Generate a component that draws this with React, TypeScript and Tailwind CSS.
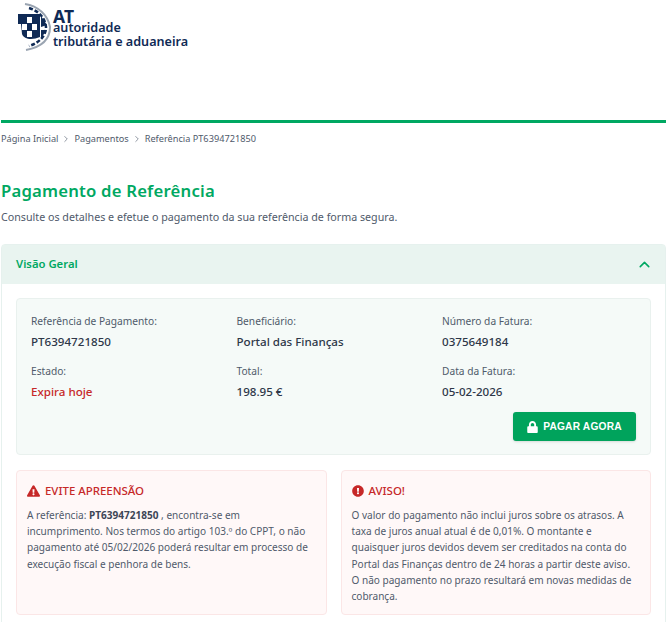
import React from "react";
import { ChevronRight, ChevronUp } from "lucide-react";
import { FaLock, FaExclamationTriangle, FaExclamationCircle } from "react-icons/fa";

function Logo() {
  return (
    <div className="flex items-start h-[56px] pl-[17px] pt-[3px]">
      <svg width="36" height="48" viewBox="0 0 36 48" className="shrink-0">
        <path d="M1 11H23V34C16 37 7 37 5 31L4 21H1Z" fill="#0f2a55" />
        <path d="M8 1C21 3 31 12 33 24C33 36 25 44 9 47" fill="none" stroke="#9aa4b1" strokeWidth="2" />
        <path d="M12 5C22 8 28 15 29 24C29 33 22 40 12 43" fill="none" stroke="#0f2a55" strokeWidth="2.5" strokeDasharray="4 2" />
        <path d="M24 13L30 22L24 24Z M24 27H30L24 35Z" fill="#0f2a55" />
        <rect x="10" y="14" width="5" height="6" fill="#fff" />
        <rect x="5" y="21" width="5" height="6" fill="#fff" />
        <rect x="15" y="21" width="5" height="6" fill="#fff" />
        <rect x="10" y="28" width="5" height="6" fill="#fff" />
      </svg>
      <div className="text-[#0f2a55] font-['Noto_Sans',sans-serif]">
        <div className="font-bold text-[17.5px] leading-[12px] mt-[7px]">AT</div>
        <div className="text-[12.6px] leading-[14px] mt-[-1px] font-semibold">autoridade</div>
        <div className="text-[12.6px] leading-[14px] font-semibold whitespace-nowrap">tributária e aduaneira</div>
      </div>
    </div>
  );
}

function Field({ label, value, valueClass = "text-[#2d3748]" }: { label: string; value: string; valueClass?: string }) {
  return (
    <div className="h-[49.5px]">
      <div className="text-[10.2px] leading-[16px] text-[#4f5a6b]">{label}</div>
      <div className={`text-[11.6px] leading-[18px] mt-[4px] font-medium ${valueClass}`}>{value}</div>
    </div>
  );
}

export default function App() {
  return (
    <div className="w-[670px] h-[622px] overflow-hidden bg-white font-['Noto_Sans',sans-serif]">
      <Logo />
      <div className="h-[3px] mt-[64px] ml-[1px] mr-[4px] bg-[#00a862]" />
      <nav className="flex items-center pl-[1px] mt-[8px] h-[16px] text-[9.2px] text-[#4f5a6b]">
        <span>Página Inicial</span>
        <ChevronRight className="w-[10px] h-[10px] mx-[3px]" strokeWidth={1.5} />
        <span>Pagamentos</span>
        <ChevronRight className="w-[10px] h-[10px] mx-[3px]" strokeWidth={1.5} />
        <span>Referência PT6394721850</span>
      </nav>
      <h1 className="pl-[1px] mt-[32px] text-[16.7px] leading-[24px] font-semibold text-[#00a862] tracking-[0.2px]">Pagamento de Referência</h1>
      <p className="pl-[1px] mt-[6px] text-[10.7px] leading-[16px] text-[#4f5a6b]">Consulte os detalhes e efetue o pagamento da sua referência de forma segura.</p>
      <section className="ml-[1px] mr-[4px] mt-[19px] border border-[#e6f1ee] rounded-t-[4px] h-[400px]">
        <header className="h-[39px] bg-[#e9f4f0] flex items-center justify-between pl-[14px] pr-[12px]">
          <span className="text-[11.3px] font-semibold text-[#00a862]">Visão Geral</span>
          <ChevronUp className="w-[17px] h-[17px] text-[#00a862]" strokeWidth={2.2} />
        </header>
        <div className="px-[14px] pt-[14px]">
          <div className="h-[157px] bg-[#f5faf8] border border-[#e9f1ee] rounded-[4px] px-[14px] pt-[14px]">
            <div className="grid grid-cols-[205.5px_205.5px_1fr]">
              <div>
                <Field label="Referência de Pagamento:" value="PT6394721850" />
                <Field label="Estado:" value="Expira hoje" valueClass="text-[#c62828]" />
              </div>
              <div>
                <Field label="Beneficiário:" value="Portal das Finanças" />
                <Field label="Total:" value="198.95 €" />
              </div>
              <div>
                <Field label="Número da Fatura:" value="0375649184" />
                <Field label="Data da Fatura:" value="05-02-2026" />
              </div>
            </div>
            <div className="flex justify-end">
              <button className="w-[123px] h-[29px] bg-[#00a35c] rounded-[3px] shadow-sm flex items-center justify-center gap-[5px] text-white text-[10.2px] font-bold font-['Liberation_Sans',sans-serif] tracking-[0.2px]">
                <FaLock className="w-[11px] h-[12px]" />
                PAGAR AGORA
              </button>
            </div>
          </div>
          <div className="grid grid-cols-2 gap-x-[14px] mt-[15px]">
            <div className="h-[145px] bg-[#fff8f8] border border-[#fbe6e6] rounded-[4px] pl-[10px] pr-[10px] pt-[10px]">
              <h2 className="flex items-center gap-[5px] text-[11.45px] leading-[20px] text-[#c62828] font-medium">
                <FaExclamationTriangle className="w-[13px] h-[12px]" />
                EVITE APREENSÃO
              </h2>
              <p className="mt-[6px] text-[10.05px] leading-[16.2px] text-[#4f5a6b]">
                A referência: <b className="font-bold text-[#3d4656]">PT6394721850</b> , encontra-se em incumprimento. Nos termos do artigo 103.º do CPPT, o não pagamento até 05/02/2026 poderá resultar em processo de execução fiscal e penhora de bens.
              </p>
            </div>
            <div className="h-[145px] bg-[#fff8f8] border border-[#fbe6e6] rounded-[4px] pl-[10px] pr-[10px] pt-[10px]">
              <h2 className="flex items-center gap-[5px] text-[11.45px] leading-[20px] text-[#c62828] font-medium">
                <FaExclamationCircle className="w-[12px] h-[12px]" />
                AVISO!
              </h2>
              <p className="mt-[6px] text-[10.05px] leading-[16.2px] text-[#4f5a6b]">
                O valor do pagamento não inclui juros sobre os atrasos. A taxa de juros anual atual é de 0,01%. O montante e quaisquer juros devidos devem ser creditados na conta do Portal das Finanças dentro de 24 horas a partir deste aviso. O não pagamento no prazo resultará em novas medidas de cobrança.
              </p>
            </div>
          </div>
        </div>
      </section>
    </div>
  );
}
